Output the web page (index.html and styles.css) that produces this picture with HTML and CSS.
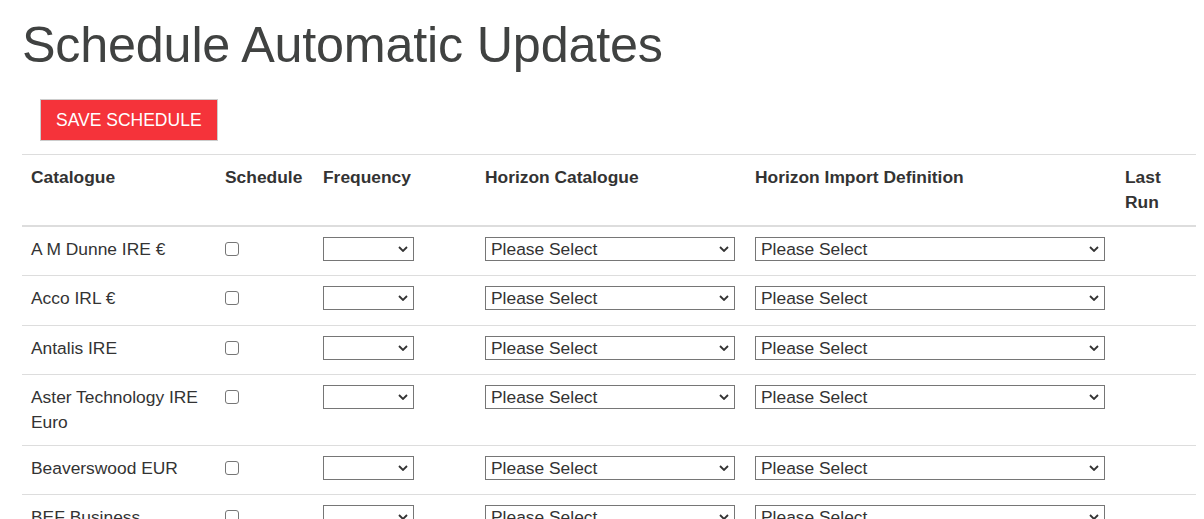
FILE: index.html
```html
<!DOCTYPE html>
<html lang="en">
<head>
    <meta charset="UTF-8">
    <meta name="viewport" content="width=device-width, initial-scale=1.0">
    <title>Schedule Automatic Updates</title>
    <link rel="stylesheet" href="styles.css">
</head>
<body>
    <div class="page">
        <h1 class="title">Schedule Automatic Updates</h1>

        <div class="actions">
            <button class="btn-save" type="button">SAVE SCHEDULE</button>
        </div>

        <table class="schedule">
            <colgroup>
                <col class="col-catalogue">
                <col class="col-schedule">
                <col class="col-frequency">
                <col class="col-horizon">
                <col class="col-import">
                <col class="col-lastrun">
            </colgroup>
            <thead>
                <tr>
                    <th>Catalogue</th>
                    <th>Schedule</th>
                    <th>Frequency</th>
                    <th>Horizon Catalogue</th>
                    <th>Horizon Import Definition</th>
                    <th>Last Run</th>
                </tr>
            </thead>
            <tbody>
                <tr>
                    <td>A M Dunne IRE €</td>
                    <td><input type="checkbox"></td>
                    <td><span class="select-wrap sel-freq"><select><option></option></select><svg class="chev" viewBox="0 0 10 6"><path d="M1 1l4 4 4-4"/></svg></span></td>
                    <td><span class="select-wrap sel-horizon"><select><option>Please Select</option></select><svg class="chev" viewBox="0 0 10 6"><path d="M1 1l4 4 4-4"/></svg></span></td>
                    <td><span class="select-wrap sel-import"><select><option>Please Select</option></select><svg class="chev" viewBox="0 0 10 6"><path d="M1 1l4 4 4-4"/></svg></span></td>
                    <td></td>
                </tr>
                <tr>
                    <td>Acco IRL €</td>
                    <td><input type="checkbox"></td>
                    <td><span class="select-wrap sel-freq"><select><option></option></select><svg class="chev" viewBox="0 0 10 6"><path d="M1 1l4 4 4-4"/></svg></span></td>
                    <td><span class="select-wrap sel-horizon"><select><option>Please Select</option></select><svg class="chev" viewBox="0 0 10 6"><path d="M1 1l4 4 4-4"/></svg></span></td>
                    <td><span class="select-wrap sel-import"><select><option>Please Select</option></select><svg class="chev" viewBox="0 0 10 6"><path d="M1 1l4 4 4-4"/></svg></span></td>
                    <td></td>
                </tr>
                <tr>
                    <td>Antalis IRE</td>
                    <td><input type="checkbox"></td>
                    <td><span class="select-wrap sel-freq"><select><option></option></select><svg class="chev" viewBox="0 0 10 6"><path d="M1 1l4 4 4-4"/></svg></span></td>
                    <td><span class="select-wrap sel-horizon"><select><option>Please Select</option></select><svg class="chev" viewBox="0 0 10 6"><path d="M1 1l4 4 4-4"/></svg></span></td>
                    <td><span class="select-wrap sel-import"><select><option>Please Select</option></select><svg class="chev" viewBox="0 0 10 6"><path d="M1 1l4 4 4-4"/></svg></span></td>
                    <td></td>
                </tr>
                <tr>
                    <td>Aster Technology IRE Euro</td>
                    <td><input type="checkbox"></td>
                    <td><span class="select-wrap sel-freq"><select><option></option></select><svg class="chev" viewBox="0 0 10 6"><path d="M1 1l4 4 4-4"/></svg></span></td>
                    <td><span class="select-wrap sel-horizon"><select><option>Please Select</option></select><svg class="chev" viewBox="0 0 10 6"><path d="M1 1l4 4 4-4"/></svg></span></td>
                    <td><span class="select-wrap sel-import"><select><option>Please Select</option></select><svg class="chev" viewBox="0 0 10 6"><path d="M1 1l4 4 4-4"/></svg></span></td>
                    <td></td>
                </tr>
                <tr>
                    <td>Beaverswood EUR</td>
                    <td><input type="checkbox"></td>
                    <td><span class="select-wrap sel-freq"><select><option></option></select><svg class="chev" viewBox="0 0 10 6"><path d="M1 1l4 4 4-4"/></svg></span></td>
                    <td><span class="select-wrap sel-horizon"><select><option>Please Select</option></select><svg class="chev" viewBox="0 0 10 6"><path d="M1 1l4 4 4-4"/></svg></span></td>
                    <td><span class="select-wrap sel-import"><select><option>Please Select</option></select><svg class="chev" viewBox="0 0 10 6"><path d="M1 1l4 4 4-4"/></svg></span></td>
                    <td></td>
                </tr>
                <tr>
                    <td>BEF Business Equipment</td>
                    <td><input type="checkbox"></td>
                    <td><span class="select-wrap sel-freq"><select><option></option></select><svg class="chev" viewBox="0 0 10 6"><path d="M1 1l4 4 4-4"/></svg></span></td>
                    <td><span class="select-wrap sel-horizon"><select><option>Please Select</option></select><svg class="chev" viewBox="0 0 10 6"><path d="M1 1l4 4 4-4"/></svg></span></td>
                    <td><span class="select-wrap sel-import"><select><option>Please Select</option></select><svg class="chev" viewBox="0 0 10 6"><path d="M1 1l4 4 4-4"/></svg></span></td>
                    <td></td>
                </tr>
            </tbody>
        </table>
    </div>
</body>
</html>
```

FILE: styles.css
```css
body {
    margin: 0;
    font-family: "Liberation Sans", Arial, sans-serif;
    font-size: 17.4px;
    color: #333;
    background-color: #ffffff;
}
.page {
    padding: 0 8px 0 22px;
}
.title {
    margin: 17px 0 0;
    font-size: 50.3px;
    font-weight: normal;
    line-height: 55px;
    letter-spacing: -0.2px;
    color: #404241;
}
.actions {
    padding: 27px 0 13px 18px;
}
.btn-save {
    display: block;
    font-family: "Liberation Sans", Arial, sans-serif;
    font-size: 17.5px;
    line-height: 24px;
    padding: 8px 15px;
    color: #fff;
    background-color: #f5333a;
    border: 1px solid #ccc;
    border-radius: 0;
    cursor: pointer;
}
.schedule {
    width: 100%;
    table-layout: fixed;
    border-collapse: collapse;
    border-spacing: 0;
}
.col-catalogue { width: 193px; }
.col-schedule { width: 98px; }
.col-frequency { width: 162px; }
.col-horizon { width: 270px; }
.col-import { width: 370px; }
.col-lastrun { width: 81px; }
.schedule th,
.schedule td {
    padding: 10px;
    text-align: left;
    vertical-align: top;
    line-height: 25px;
    border-top: 1px solid #ddd;
}
.schedule th {
    font-weight: bold;
    color: #333;
    border-bottom: 2px solid #ddd;
}
.schedule td:first-child,
.schedule th:first-child {
    padding-left: 9px;
}
.schedule input[type="checkbox"] {
    -webkit-appearance: none;
    appearance: none;
    display: block;
    box-sizing: border-box;
    width: 14px;
    height: 14px;
    margin: 5px 0 0;
    background-color: #fff;
    border: 1px solid #767676;
    border-radius: 3px;
}
.select-wrap {
    position: relative;
    display: block;
    height: 24px;
    margin-bottom: 4.3px;
}
.select-wrap select {
    -webkit-appearance: none;
    appearance: none;
    display: block;
    box-sizing: border-box;
    width: 100%;
    height: 24px;
    padding: 0 22px 0 5px;
    font-family: "Liberation Sans", Arial, sans-serif;
    font-size: 17.4px;
    color: #333;
    background-color: #fff;
    border: 1px solid #767676;
    border-radius: 0;
}
.chev {
    position: absolute;
    right: 6px;
    top: 9px;
    width: 10px;
    height: 6px;
    fill: none;
    stroke: #333;
    stroke-width: 1.8;
    pointer-events: none;
}
.sel-freq { width: 91px; }
.sel-horizon { width: 250px; }
.sel-import { width: 350px; }
```
